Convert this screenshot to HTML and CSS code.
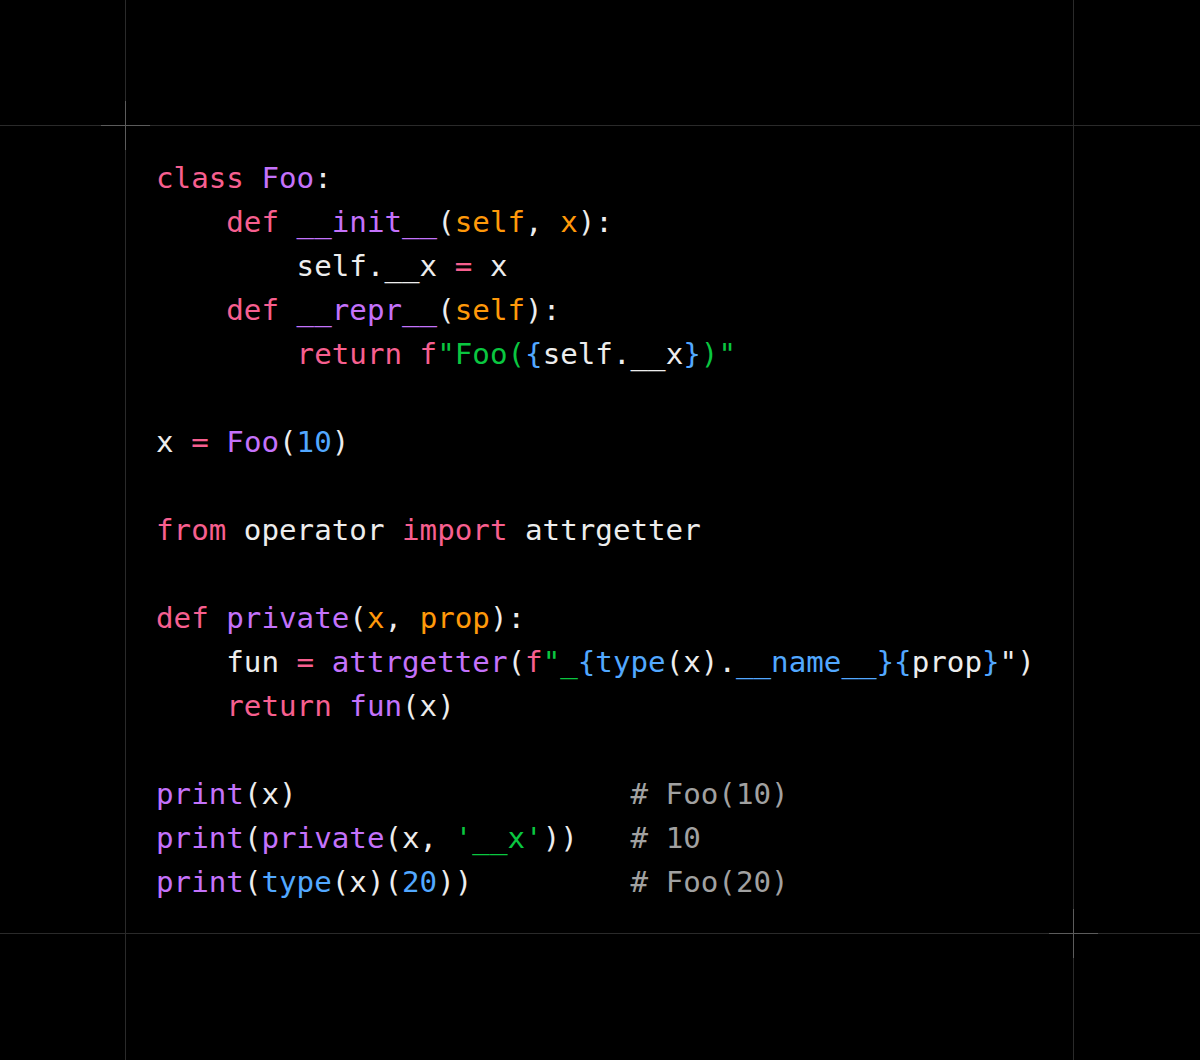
FILE: index.html
```html
<!DOCTYPE html>
<html>
<head>
<meta charset="utf-8">
<link rel="stylesheet" href="styles.css">
</head>
<body>
<div class="page">
  <div class="vline v1"></div>
  <div class="vline v2"></div>
  <div class="hline h1"></div>
  <div class="hline h2"></div>
  <div class="cell">
    <span class="cross cross-tl"></span>
    <span class="cross cross-br"></span>
<pre class="code"><span class="k">class</span> <span class="fn">Foo</span>:
    <span class="k">def</span> <span class="fn">__init__</span>(<span class="p">self</span>, <span class="p">x</span>):
        self.__x <span class="k">=</span> x
    <span class="k">def</span> <span class="fn">__repr__</span>(<span class="p">self</span>):
        <span class="k">return</span> <span class="k">f</span><span class="s">"Foo(</span><span class="b">{</span>self.__x<span class="b">}</span><span class="s">)"</span>

x <span class="k">=</span> <span class="fn">Foo</span>(<span class="b">10</span>)

<span class="k">from</span> operator <span class="k">import</span> attrgetter

<span class="k">def</span> <span class="fn">private</span>(<span class="p">x</span>, <span class="p">prop</span>):
    fun <span class="k">=</span> <span class="fn">attrgetter</span>(<span class="k">f</span><span class="s">"_</span><span class="b">{type</span>(x).<span class="b">__name__}{</span>prop<span class="b">}</span>")
    <span class="k">return</span> <span class="fn">fun</span>(x)

<span class="fn">print</span>(x)                   <span class="c"># Foo(10)</span>
<span class="fn">print</span>(<span class="fn">private</span>(x, <span class="s">'__x'</span>))   <span class="c"># 10</span>
<span class="fn">print</span>(<span class="b">type</span>(x)(<span class="b">20</span>))         <span class="c"># Foo(20)</span></pre>
  </div>
</div>
</body>
</html>
```
FILE: styles.css
```css
html, body {
  margin: 0;
  padding: 0;
  background: #000;
}

.page {
  display: grid;
  grid-template-columns: 125px 1px 947px 1px 1fr;
  grid-template-rows: 125px 1px 807px 1px 1fr;
  width: 1200px;
  height: 1060px;
  overflow: hidden;
}

.vline {
  grid-row: 1 / -1;
  background: #2a2a2a;
}
.v1 { grid-column: 2; }
.v2 { grid-column: 4; }

.hline {
  grid-column: 1 / -1;
  background: #2a2a2a;
}
.h1 { grid-row: 2; }
.h2 { grid-row: 4; }

.cell {
  grid-column: 3;
  grid-row: 3;
  position: relative;
  padding: 30px 0 0 30px;
}

.cross {
  position: absolute;
  width: 49px;
  height: 49px;
}
.cross::before,
.cross::after {
  content: "";
  position: absolute;
  background: #5c5c5c;
}
.cross::before {
  left: 0;
  right: 0;
  top: 24px;
  height: 1px;
}
.cross::after {
  top: 0;
  bottom: 0;
  left: 24px;
  width: 1px;
}
.cross-tl {
  left: -25px;
  top: -25px;
}
.cross-br {
  right: -25px;
  bottom: -25px;
}

.code {
  margin: 0;
  font-family: "DejaVu Sans Mono", "Liberation Mono", monospace;
  font-size: 29.2px;
  line-height: 44px;
  color: #ededed;
}

.k { color: #f75f8f; }
.fn { color: #c472fb; }
.p { color: #ff990a; }
.s { color: #0ac740; }
.b { color: #52a8ff; }
.c { color: #a1a1a1; }
```
